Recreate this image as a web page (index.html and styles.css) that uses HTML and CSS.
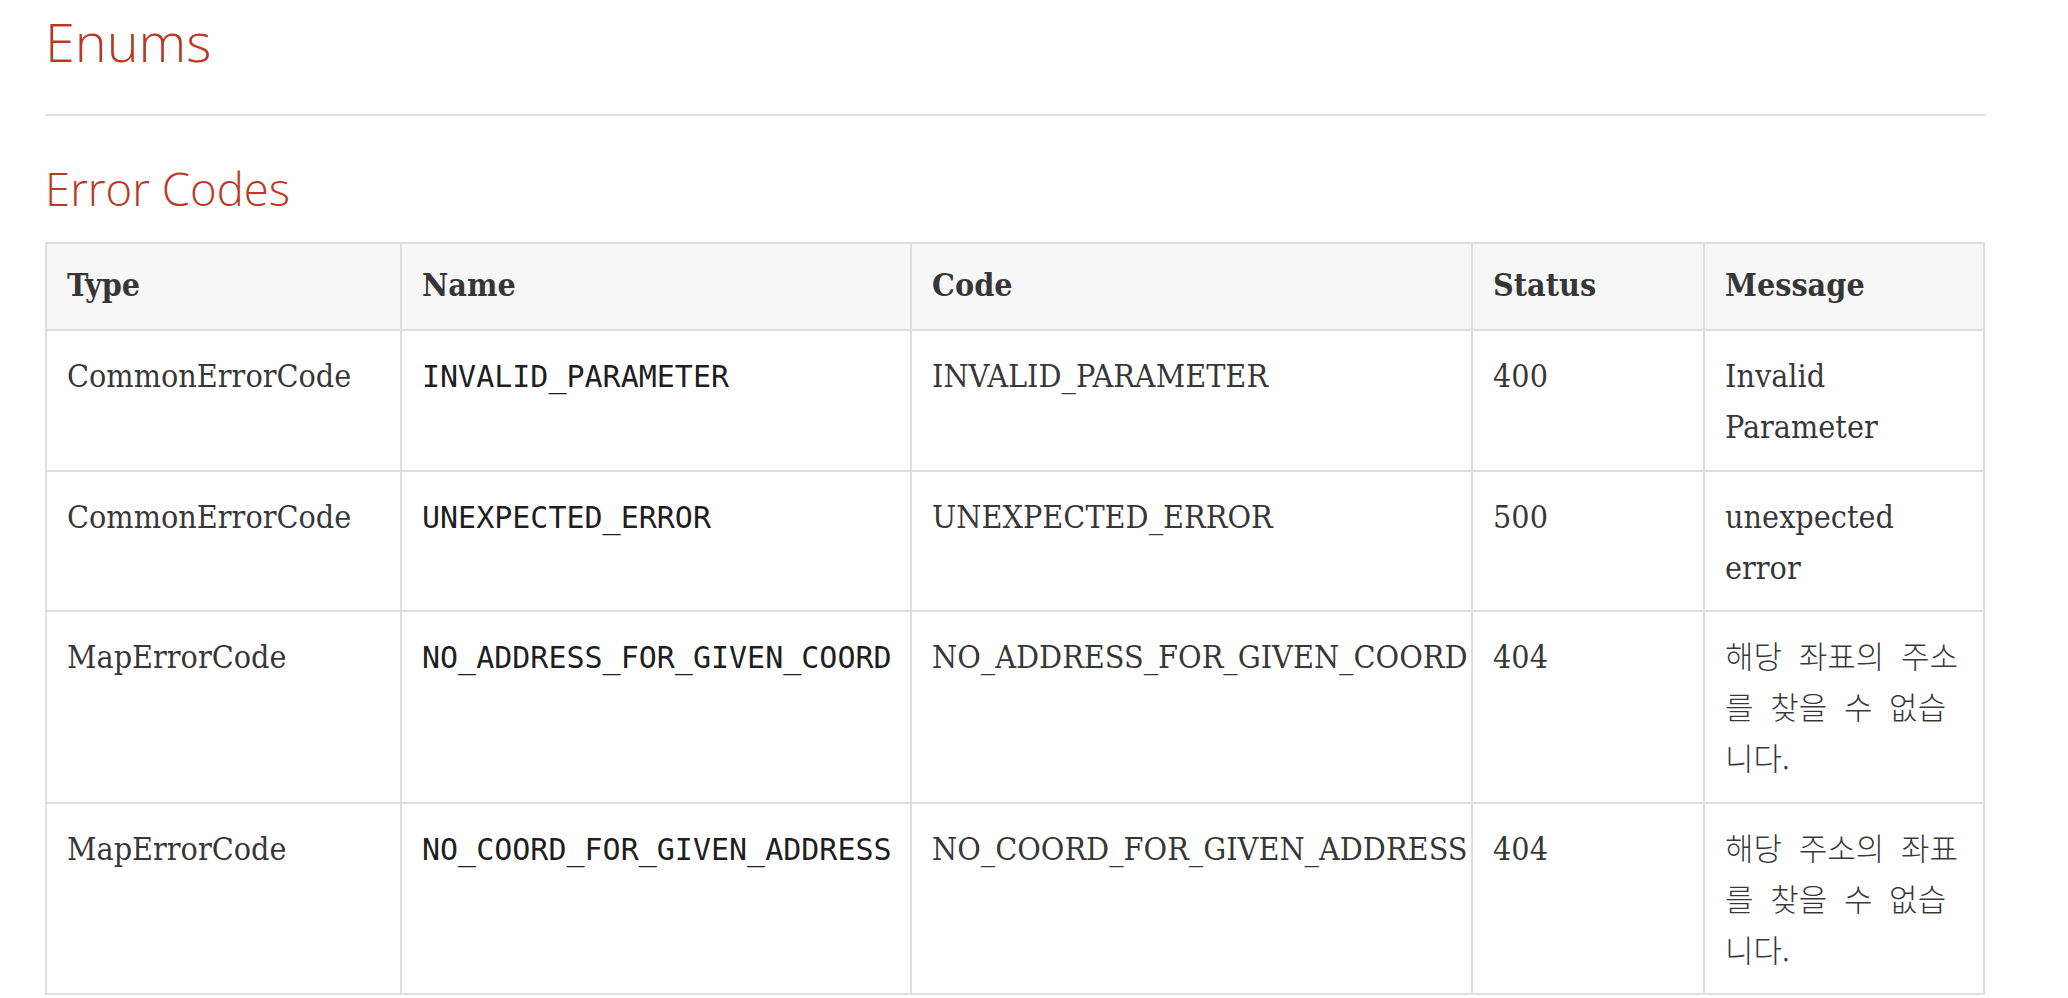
FILE: index.html
```html
<!DOCTYPE html>
<html lang="ko">
<head>
<meta charset="utf-8">
<title>Enums</title>
<link rel="stylesheet" href="styles.css">
</head>
<body>
<div class="page">
  <h2 class="sect-title">Enums</h2>
  <hr class="sect-rule">
  <h3 class="sub-title">Error Codes</h3>
  <table class="tableblock">
    <colgroup>
      <col class="col-type">
      <col class="col-name">
      <col class="col-code">
      <col class="col-status">
      <col class="col-message">
    </colgroup>
    <thead>
      <tr>
        <th>Type</th>
        <th>Name</th>
        <th>Code</th>
        <th>Status</th>
        <th>Message</th>
      </tr>
    </thead>
    <tbody>
      <tr>
        <td><p class="cell">CommonErrorCode</p></td>
        <td><p class="cell"><code class="mono">INVALID_PARAMETER</code></p></td>
        <td><p class="cell">INVALID_PARAMETER</p></td>
        <td><p class="cell">400</p></td>
        <td><p class="cell">Invalid Parameter</p></td>
      </tr>
      <tr>
        <td><p class="cell">CommonErrorCode</p></td>
        <td><p class="cell"><code class="mono">UNEXPECTED_ERROR</code></p></td>
        <td><p class="cell">UNEXPECTED_ERROR</p></td>
        <td><p class="cell">500</p></td>
        <td><p class="cell">unexpected error</p></td>
      </tr>
      <tr>
        <td><p class="cell">MapErrorCode</p></td>
        <td><p class="cell"><code class="mono">NO_ADDRESS_FOR_GIVEN_COORD</code></p></td>
        <td><p class="cell">NO_ADDRESS_FOR_GIVEN_COORD</p></td>
        <td><p class="cell">404</p></td>
        <td><p class="cell"><span class="ko">해당 좌표의 주소<br>를 찾을 수 없습<br>니다.</span></p></td>
      </tr>
      <tr>
        <td><p class="cell">MapErrorCode</p></td>
        <td><p class="cell"><code class="mono">NO_COORD_FOR_GIVEN_ADDRESS</code></p></td>
        <td><p class="cell">NO_COORD_FOR_GIVEN_ADDRESS</p></td>
        <td><p class="cell">404</p></td>
        <td><p class="cell"><span class="ko">해당 주소의 좌표<br>를 찾을 수 없습<br>니다.</span></p></td>
      </tr>
    </tbody>
  </table>
</div>
</body>
</html>
```

FILE: styles.css
```css
html, body {
  margin: 0;
  padding: 0;
  background: #ffffff;
}

body {
  color: rgba(0, 0, 0, 0.8);
  font-family: "DejaVu Serif Condensed", "DejaVu Serif", "Noto Sans CJK KR", serif;
  font-stretch: condensed;
  font-size: 32px;
}

.page {
  width: 1940px;
  padding: 8px 0 0 45px;
}

.sect-title {
  margin: 0;
  font-family: "Open Sans", "Noto Sans", sans-serif;
  font-stretch: normal;
  font-weight: 300;
  font-size: 54px;
  line-height: 67px;
  color: #ba3925;
}

.sect-rule {
  margin: 39px 0 0;
  border: 0;
  border-top: 2px solid #dddddd;
  height: 0;
}

.sub-title {
  margin: 44px 0 26px;
  font-family: "Open Sans", "Noto Sans", sans-serif;
  font-stretch: normal;
  font-weight: 300;
  font-size: 45.5px;
  line-height: 56px;
  color: #ba3925;
}

.tableblock {
  width: 1940px;
  table-layout: fixed;
  border-collapse: collapse;
  border: 2px solid #dedede;
  background: #ffffff;
}

.col-type { width: 355px; }
.col-name { width: 510px; }
.col-code { width: 561px; }
.col-status { width: 232px; }
.col-message { width: 280px; }

.tableblock th,
.tableblock td {
  border: 2px solid #dedede;
  text-align: left;
  vertical-align: top;
  line-height: 1.6;
  color: rgba(0, 0, 0, 0.8);
}

.tableblock thead {
  background: #f7f7f7;
}

.tableblock th {
  padding: 16px 20px 18px;
  font-weight: 700;
}

.tableblock td {
  padding: 20px 20px 16px;
}

.cell {
  margin: 0;
}

.mono {
  font-family: "DejaVu Sans Mono", "Liberation Mono", monospace;
  font-stretch: normal;
  font-size: 30px;
  color: rgba(0, 0, 0, 0.9);
}

.ko {
  font-family: "Noto Sans CJK KR", sans-serif;
  font-stretch: normal;
  font-weight: 300;
  font-size: 31px;
  line-height: 1.2;
  word-spacing: 8px;
  white-space: nowrap;
}
```
